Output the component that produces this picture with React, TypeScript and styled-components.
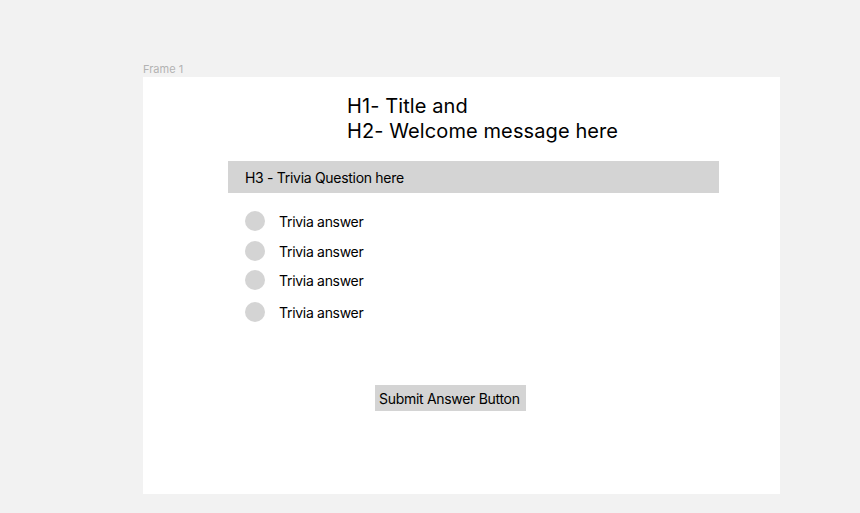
import React from "react";
import styled, { createGlobalStyle } from "styled-components";

const Global = createGlobalStyle`
  html, body { margin: 0; padding: 0; background: #f2f2f2; }
  body { font-family: Inter, "Noto Sans", sans-serif; color: #000; }
`;

const Canvas = styled.div`
  width: 860px;
  height: 513px;
  background: #f2f2f2;
  display: flex;
  flex-direction: column;
  padding-left: 143px;
  padding-top: 62px;
  box-sizing: border-box;
`;

const FrameLabel = styled.div`
  font-size: 11px;
  line-height: 14px;
  color: #b3b3b3;
  height: 15px;
`;

const Frame = styled.div`
  width: 637px;
  height: 417px;
  background: #ffffff;
  display: flex;
  flex-direction: column;
  padding-top: 17px;
  box-sizing: border-box;
`;

const Heading = styled.div`
  margin-left: 204px;
  font-size: 20px;
  line-height: 25px;
  font-weight: 400;
  letter-spacing: 0.1px;
`;

const QuestionBar = styled.div`
  margin-top: 17px;
  margin-left: 85px;
  width: 491px;
  height: 32px;
  background: #d4d4d4;
  display: flex;
  align-items: center;
  padding-left: 17px;
  box-sizing: border-box;
  font-size: 14px;
  letter-spacing: -0.3px;
`;

const AnswerList = styled.div`
  display: flex;
  flex-direction: column;
  margin-left: 102px;
  margin-top: 18px;
`;

const AnswerRow = styled.div<{ $gap: number }>`
  display: flex;
  align-items: center;
  gap: 14px;
  height: 20px;
  margin-top: ${(p) => p.$gap}px;
  font-size: 14px;
  letter-spacing: -0.3px;
`;

const Radio = styled.span`
  width: 20px;
  height: 20px;
  border-radius: 50%;
  background: #d4d4d4;
  flex-shrink: 0;
`;

const SubmitButton = styled.div`
  margin-top: 63px;
  margin-left: 232px;
  width: 151px;
  height: 26px;
  background: #d4d4d4;
  display: flex;
  align-items: center;
  padding-left: 4px;
  box-sizing: border-box;
  font-size: 14px;
  letter-spacing: -0.3px;
  white-space: nowrap;
`;

const gaps = [0, 10, 9, 12];

export default function App() {
  return (
    <>
      <Global />
      <Canvas>
        <FrameLabel>Frame 1</FrameLabel>
        <Frame>
          <Heading>
            H1- Title and
            <br />
            H2- Welcome message here
          </Heading>
          <QuestionBar>H3 - Trivia Question here</QuestionBar>
          <AnswerList>
            {gaps.map((g, i) => (
              <AnswerRow key={i} $gap={g}>
                <Radio />
                Trivia answer
              </AnswerRow>
            ))}
          </AnswerList>
          <SubmitButton>Submit Answer Button</SubmitButton>
        </Frame>
      </Canvas>
    </>
  );
}
